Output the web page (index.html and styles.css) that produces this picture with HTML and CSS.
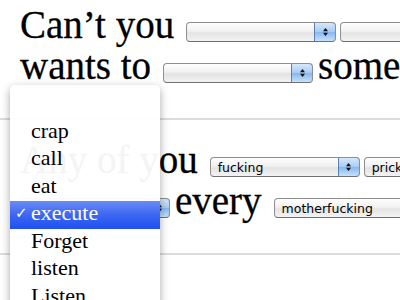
FILE: index.html
```html
<!DOCTYPE html>
<html>
<head>
<meta charset="utf-8">
<link rel="stylesheet" href="styles.css">
</head>
<body>
<div class="page">
  <section class="verse">
    <div class="row">
      <span class="word">Can’t you</span>
      <div class="sel"><span class="val"></span><span class="arrow"><svg width="7" height="12" viewBox="0 0 7 12"><path d="M3.5 2L6 5.2H1Z M1 6.8H6L3.5 10Z"/></svg></span></div>
      <div class="sel"><span class="val"></span><span class="arrow"><svg width="7" height="12" viewBox="0 0 7 12"><path d="M3.5 2L6 5.2H1Z M1 6.8H6L3.5 10Z"/></svg></span></div>
    </div>
    <div class="row">
      <span class="word">wants to</span>
      <div class="sel"><span class="val"></span><span class="arrow"><svg width="7" height="12" viewBox="0 0 7 12"><path d="M3.5 2L6 5.2H1Z M1 6.8H6L3.5 10Z"/></svg></span></div>
      <span class="word">something</span>
    </div>
  </section>
  <hr class="rule">
  <section class="verse">
    <div class="row">
      <span class="word">Any of you</span>
      <div class="sel"><span class="val">fucking</span><span class="arrow"><svg width="7" height="12" viewBox="0 0 7 12"><path d="M3.5 2L6 5.2H1Z M1 6.8H6L3.5 10Z"/></svg></span></div>
      <div class="sel"><span class="val">pricks</span><span class="arrow"><svg width="7" height="12" viewBox="0 0 7 12"><path d="M3.5 2L6 5.2H1Z M1 6.8H6L3.5 10Z"/></svg></span></div>
    </div>
    <div class="row">
      <div class="sel"><span class="val">execute</span><span class="arrow"><svg width="7" height="12" viewBox="0 0 7 12"><path d="M3.5 2L6 5.2H1Z M1 6.8H6L3.5 10Z"/></svg></span></div>
      <span class="word">every</span>
      <div class="sel"><span class="val">motherfucking</span><span class="arrow"><svg width="7" height="12" viewBox="0 0 7 12"><path d="M3.5 2L6 5.2H1Z M1 6.8H6L3.5 10Z"/></svg></span></div>
    </div>
  </section>
  <hr class="rule">
</div>
<div class="menu">
  <div class="item">&nbsp;</div>
  <div class="item">crap</div>
  <div class="item">call</div>
  <div class="item">eat</div>
  <div class="item current"><span class="check">✓</span>execute</div>
  <div class="item">Forget</div>
  <div class="item">listen</div>
  <div class="item">Listen</div>
  <div class="item">look</div>
</div>
</body>
</html>
```
FILE: styles.css
```css
html, body {
  margin: 0;
  padding: 0;
  background: #fff;
  overflow: hidden;
  width: 400px;
  height: 300px;
}
body {
  padding-top: 5px;
  box-sizing: border-box;
  position: relative;
}
.page {
  padding-left: 20px;
}
.row {
  display: flex;
  align-items: flex-end;
  height: 41px;
  white-space: nowrap;
}
.word {
  font-family: "Liberation Serif", serif;
  font-size: 39px;
  line-height: 42px;
  color: #000;
  flex: none;
  -webkit-text-stroke: 0.3px #000;
}
.sel {
  flex: none;
  width: 150px;
  height: 20px;
  box-sizing: border-box;
  margin: 0 0 4px 12px;
  border: 1px solid #8e8e8e;
  border-bottom-color: #707070;
  border-radius: 4px;
  background: linear-gradient(#fefefe, #f1f1f1 45%, #e3e3e3 55%, #f3f3f3);
  display: flex;
  align-items: center;
  font-family: "DejaVu Sans", sans-serif;
  font-size: 12.5px;
  color: #000;
  overflow: hidden;
}
.row > .sel:first-child { margin-left: 0; }
.sel + .sel { margin-left: 4px; }
.sel + .word { margin-left: 5px; }
.val {
  flex: 1;
  padding-left: 7px;
  overflow: hidden;
}
.arrow {
  flex: none;
  width: 20px;
  align-self: stretch;
  margin: -1px -1px -1px 0;
  box-sizing: content-box;
  border: 1px solid #5a7fb6;
  border-radius: 0 4px 4px 0;
  background: linear-gradient(#d6e8fb, #a8ccf4 48%, #86b8ef 52%, #c8e2fb);
  display: flex;
  align-items: center;
  justify-content: center;
}
.arrow svg { fill: #111; }
.rule {
  border: 0;
  height: 2px;
  background: #dcdcdc;
  margin: 31px 0 20px -20px;
}
.menu {
  position: absolute;
  left: 10px;
  top: 85px;
  width: 150px;
  height: 260px;
  padding-top: 6px;
  box-sizing: border-box;
  background: rgba(255, 255, 255, 0.955);
  border-radius: 5px 5px 0 0;
  box-shadow: 0 3px 9px rgba(0, 0, 0, 0.35);
  font-family: "Liberation Serif", serif;
  font-size: 22px;
  color: #000;
}
.item {
  height: 27.5px;
  box-sizing: border-box;
  line-height: 23.5px;
  padding: 0 0 4px 21px;
  position: relative;
  white-space: nowrap;
}
.item.current {
  color: #fff;
  background: linear-gradient(#6a8bf6, #3d66f2 50%, #1e50f0);
}
.check {
  position: absolute;
  left: 5px;
  top: 0;
  font-family: "DejaVu Sans", sans-serif;
  font-size: 15px;
  line-height: 25px;
}
```
